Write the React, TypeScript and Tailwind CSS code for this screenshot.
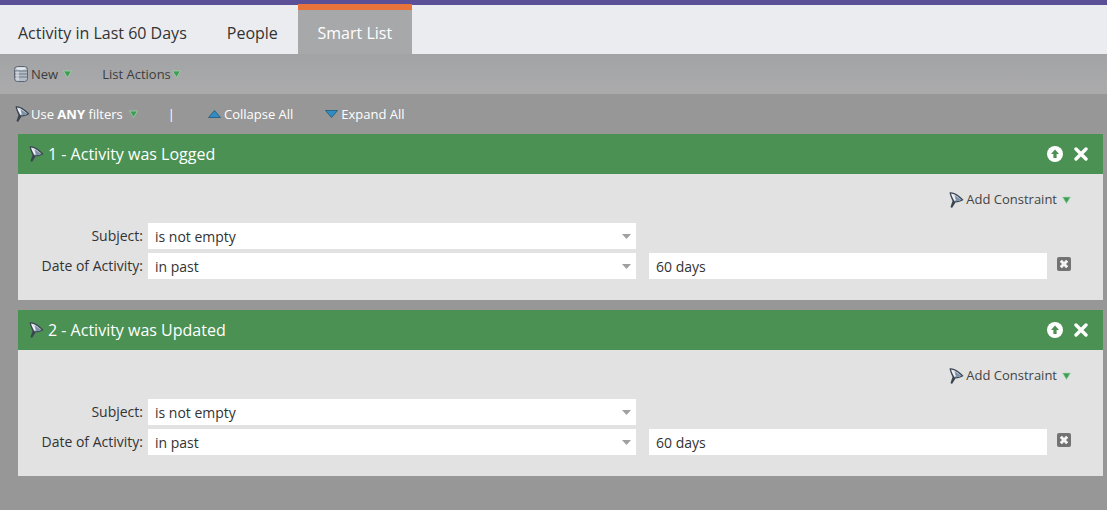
import React from 'react';

function Caret({ className = '' }: { className?: string }) {
  return (
    <svg width="9" height="8" viewBox="0 0 9 8" className={className}>
      <path d="M0.5 1 H8.5 L4.5 7.5 Z" fill="#3f9e55" stroke="#a9d8b4" strokeWidth="0.7" />
    </svg>
  );
}

function FunnelIcon({ className = '' }: { className?: string }) {
  return (
    <svg width="16" height="18" viewBox="0 0 16 18" className={className}>
      <path d="M1.5 1.5 C6 0.5 12 5 15.5 9 C13 10.5 10 11.5 7.5 11.5 L4 17 L2.5 16 L4.5 10 C3 7 2 4 1.5 1.5 Z" fill="#3a4552" />
      <path d="M3 2.5 C6 2.5 10 5.5 13.5 8.8 C11 9.8 9 10.3 6.5 10.3 C5 8 3.7 5 3 2.5 Z" fill="#d5dde6" />
      <path d="M7 4.5 C9 6 12 8 13.5 8.8 C11 9.8 9 10.3 7.5 10 Z" fill="#7f90a6" />
      <path d="M4 3.5 C5 5 6 7 7.3 9" stroke="#fff" strokeWidth="1" fill="none" />
    </svg>
  );
}

function DbIcon() {
  return (
    <svg width="14" height="16" viewBox="0 0 14 16">
      <rect x="0.5" y="0.5" width="13" height="15" rx="3" fill="#b4bdc7" stroke="#5d6773" />
      <path d="M1 5 H13 M1 8 H13 M1 11 H13" stroke="#6d7884" strokeWidth="1" />
      <ellipse cx="7" cy="2.6" rx="5" ry="1.4" fill="#e4e9ee" />
      <rect x="2" y="5.5" width="3" height="9" fill="#dde2e8" opacity="0.6" />
    </svg>
  );
}

function SelectBox({ value }: { value: string }) {
  return (
    <div className="w-[488px] h-[26px] bg-white flex items-center justify-between pl-[7px] pr-[5px] text-[14px] text-[#333]">
      <span>{value}</span>
      <svg width="9" height="5" viewBox="0 0 9 5">
        <path d="M0 0 H9 L4.5 5 Z" fill="#a0a0a0" />
      </svg>
    </div>
  );
}

function FilterPanel({ title }: { title: string }) {
  return (
    <div className="mx-[18px] w-[1085px]">
      <div className="h-10 bg-[#4a9153] flex items-center pl-[10px] pr-[15px] text-white">
        <FunnelIcon />
        <span className="ml-[4px] text-[16px]">{title}</span>
        <div className="ml-auto flex items-center gap-[11px]">
          <svg width="16" height="16" viewBox="0 0 16 16">
            <circle cx="8" cy="8" r="8" fill="#fff" />
            <path d="M8 3.5 L12 8 H9.6 V12 H6.4 V8 H4 Z" fill="#4a9153" />
          </svg>
          <svg width="14" height="14" viewBox="0 0 14 14">
            <path d="M2 2 L12 12 M12 2 L2 12" stroke="#fff" strokeWidth="3.4" strokeLinecap="round" />
          </svg>
        </div>
      </div>
      <div className="h-[126px] bg-[#e2e2e2] pt-[17px]">
        <div className="flex items-center justify-end pr-[32px] h-[18px] text-[13px] text-[#444]">
          <FunnelIcon />
          <span className="ml-[2px]">Add Constraint</span>
          <Caret className="ml-[5px]" />
        </div>
        <div className="mt-[14px] flex items-center h-[26px]">
          <div className="w-[125px] text-right text-[14px] text-[#333] -mt-[2px]">Subject:</div>
          <div className="ml-[5px]"><SelectBox value="is not empty" /></div>
        </div>
        <div className="mt-[4px] flex items-center h-[26px]">
          <div className="w-[125px] text-right text-[14px] text-[#333] -mt-[2px]">Date of Activity:</div>
          <div className="ml-[5px]"><SelectBox value="in past" /></div>
          <div className="ml-[13px] w-[398px] h-[26px] bg-white flex items-center pl-[7px] text-[14px] text-[#333]">60 days</div>
          <svg width="14" height="14" viewBox="0 0 14 14" className="ml-[10px] mb-[4px]">
            <rect width="14" height="14" rx="2" fill="#727272" />
            <path d="M3.8 3.8 L10.2 10.2 M10.2 3.8 L3.8 10.2" stroke="#f4f4f4" strokeWidth="3" />
          </svg>
        </div>
      </div>
    </div>
  );
}

export default function App() {
  return (
    <div className="w-[1107px] h-[510px] overflow-hidden bg-[#979797] font-['Open_Sans',sans-serif]">
      <div className="h-[5px] bg-[#5b5098]" />
      <div className="h-[49px] bg-[#ebecf0] flex text-[16px] text-[#333]">
        <div className="pl-[18px] pt-[16px]">Activity in Last 60 Days</div>
        <div className="ml-[40px] pt-[16px]">People</div>
        <div className="ml-[20px] w-[114px] -mt-px h-[50px] bg-[#a7a8aa] border-t-[6px] border-[#e8743b] text-center pt-[11px] text-white">Smart List</div>
      </div>
      <div className="h-10 bg-gradient-to-b from-[#a2a3a5] to-[#ababac] flex items-center pl-[14px] text-[13px] text-[#3d3d3d]">
        <DbIcon />
        <span className="ml-[3px] mt-[2px]">New</span>
        <Caret className="ml-[5px]" />
        <span className="ml-[30px] mt-[2px]">List Actions</span>
        <Caret className="ml-[1px]" />
      </div>
      <div className="h-10 flex items-center pl-[14px] text-[13px] text-white">
        <FunnelIcon />
        <span className="ml-px mt-[2px]">Use <b>ANY</b> filters</span>
        <Caret className="ml-[6px]" />
        <span className="ml-[30px] mt-[2px]">|</span>
        <svg width="13" height="8" viewBox="0 0 13 8" className="ml-[33px]">
          <path d="M6.5 0.5 L12.5 7.5 H0.5 Z" fill="#2f8cc4" stroke="#16506f" strokeWidth="0.7" />
        </svg>
        <span className="ml-[3px] mt-[2px]">Collapse All</span>
        <svg width="13" height="8" viewBox="0 0 13 8" className="ml-[32px]">
          <path d="M0.5 0.5 H12.5 L6.5 7.5 Z" fill="#2f8cc4" stroke="#16506f" strokeWidth="0.7" />
        </svg>
        <span className="ml-[3px] mt-[2px]">Expand All</span>
      </div>
      <div className="flex flex-col gap-[10px]">
        <FilterPanel title="1 - Activity was Logged" />
        <FilterPanel title="2 - Activity was Updated" />
      </div>
    </div>
  );
}
